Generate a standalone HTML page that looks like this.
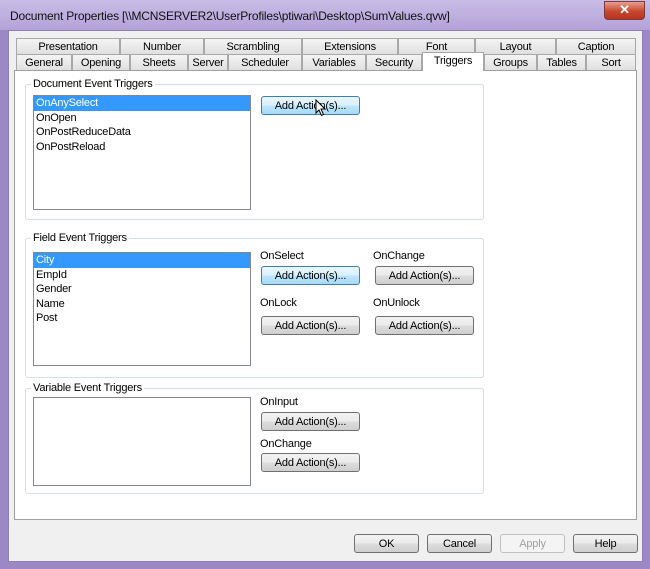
<!DOCTYPE html><html><head><style>
*{box-sizing:border-box;margin:0;padding:0}
body{width:650px;height:569px;background:#9b88c4;font-family:"Liberation Sans",sans-serif;font-size:11px;color:#000;position:relative;overflow:hidden;letter-spacing:-0.2px}
.a{position:absolute}
.title{left:0;top:0;width:650px;height:30px;background:linear-gradient(#c9bde6,#b3a2d8)}
.tt{left:10px;top:9px;font-size:12px;color:#111}
.close{left:604px;top:1px;width:41px;height:19px;border-radius:0 0 4px 4px;background:linear-gradient(#e6a08e,#c7472f 55%,#b8321e);border:1px solid #7a3b3b;color:#fff;font-weight:bold;text-align:center;font-size:13px;line-height:16px}
.body{left:8px;top:30px;width:635px;height:532px;background:#f0f0f0;border:1px solid #8e7fb4}
.panel{left:14px;top:70px;width:623px;height:450px;background:#fff;border:1px solid #a0a0a0}
.tab{position:absolute;height:16px;border:1px solid #a8a8a8;border-bottom:none;background:linear-gradient(#f4f4f4,#e0e0e0);text-align:center;line-height:16px;font-size:11px}
.sel{background:#fff;height:19px;z-index:2}
.grp{position:absolute;border:1px solid #d5dfe5;border-radius:3px}
.gl{position:absolute;background:#fff;padding:0 2px;font-size:11px;top:-7px;left:5px}
.list{position:absolute;border:1px solid #828790;background:#fff}
.it{height:14.5px;line-height:15px;padding-left:2px}
.hl{background:#3399ff;color:#fff}
.btn{position:absolute;height:19px;border:1px solid #707070;border-radius:3px;background:linear-gradient(#f2f2f2,#ebebeb 50%,#dddddd 51%,#cfcfcf);text-align:center;line-height:19px;font-size:11px}
.foc{border-color:#3c7fb1;background:linear-gradient(#eaf6fd,#d9f0fc 50%,#bee6fd 51%,#a7d9f5)}
.lbl{position:absolute;font-size:11px}
</style></head><body>
<div class="a title"></div>
<div class="a tt">Document Properties [\\MCNSERVER2\UserProfiles\ptiwari\Desktop\SumValues.qvw]</div>
<div class="a close">✕</div>
<div class="a body"></div>
<div class="a panel"></div>
<div class="tab" style="left:16px;top:38px;width:104px">Presentation</div>
<div class="tab" style="left:120px;top:38px;width:84px">Number</div>
<div class="tab" style="left:204px;top:38px;width:98px">Scrambling</div>
<div class="tab" style="left:302px;top:38px;width:96px">Extensions</div>
<div class="tab" style="left:398px;top:38px;width:77px">Font</div>
<div class="tab" style="left:475px;top:38px;width:81px">Layout</div>
<div class="tab" style="left:556px;top:38px;width:80px">Caption</div>
<div class="tab" style="left:16px;top:54px;width:56px">General</div>
<div class="tab" style="left:72px;top:54px;width:58px">Opening</div>
<div class="tab" style="left:130px;top:54px;width:58px">Sheets</div>
<div class="tab" style="left:188px;top:54px;width:40px">Server</div>
<div class="tab" style="left:228px;top:54px;width:74px">Scheduler</div>
<div class="tab" style="left:302px;top:54px;width:64px">Variables</div>
<div class="tab" style="left:366px;top:54px;width:56px">Security</div>
<div class="tab sel" style="left:422px;top:52px;width:62px">Triggers</div>
<div class="tab" style="left:484px;top:54px;width:53px">Groups</div>
<div class="tab" style="left:537px;top:54px;width:49px">Tables</div>
<div class="tab" style="left:586px;top:54px;width:50px">Sort</div>

<div class="grp" style="left:25px;top:84px;width:459px;height:136px"><span class="gl">Document Event Triggers</span></div>
<div class="list" style="left:33px;top:95px;width:218px;height:115px">
<div class="it hl">OnAnySelect</div><div class="it">OnOpen</div><div class="it">OnPostReduceData</div><div class="it">OnPostReload</div></div>
<div class="btn foc" style="left:261px;top:96px;width:99px">Add Action(s)...</div>
<svg class="a" style="left:315px;top:99px" width="12" height="18" viewBox="0 0 12 18"><path d="M1 1 L1 14 L4 11 L6.5 16.5 L8.5 15.5 L6 10 L10 10 Z" fill="#fff" stroke="#000" stroke-width="1"/></svg>

<div class="grp" style="left:25px;top:238px;width:459px;height:140px"><span class="gl">Field Event Triggers</span></div>
<div class="list" style="left:33px;top:252px;width:218px;height:114px">
<div class="it hl">City</div><div class="it">EmpId</div><div class="it">Gender</div><div class="it">Name</div><div class="it">Post</div></div>
<div class="lbl" style="left:260px;top:250px">OnSelect</div>
<div class="lbl" style="left:373px;top:250px">OnChange</div>
<div class="btn foc" style="left:261px;top:266px;width:99px">Add Action(s)...</div>
<div class="btn" style="left:375px;top:266px;width:99px">Add Action(s)...</div>
<div class="lbl" style="left:260px;top:297px">OnLock</div>
<div class="lbl" style="left:373px;top:297px">OnUnlock</div>
<div class="btn" style="left:261px;top:316px;width:99px">Add Action(s)...</div>
<div class="btn" style="left:375px;top:316px;width:99px">Add Action(s)...</div>

<div class="grp" style="left:25px;top:388px;width:459px;height:106px"><span class="gl">Variable Event Triggers</span></div>
<div class="list" style="left:33px;top:397px;width:218px;height:89px"></div>
<div class="lbl" style="left:260px;top:396px">OnInput</div>
<div class="btn" style="left:261px;top:412px;width:99px">Add Action(s)...</div>
<div class="lbl" style="left:260px;top:438px">OnChange</div>
<div class="btn" style="left:261px;top:453px;width:99px">Add Action(s)...</div>

<div class="btn" style="left:354px;top:534px;width:65px">OK</div>
<div class="btn" style="left:427px;top:534px;width:65px">Cancel</div>
<div class="btn" style="left:500px;top:534px;width:65px;color:#a0a0a0;border-color:#c0c0c0;background:#f4f4f4">Apply</div>
<div class="btn" style="left:573px;top:534px;width:65px">Help</div>
</body></html>
